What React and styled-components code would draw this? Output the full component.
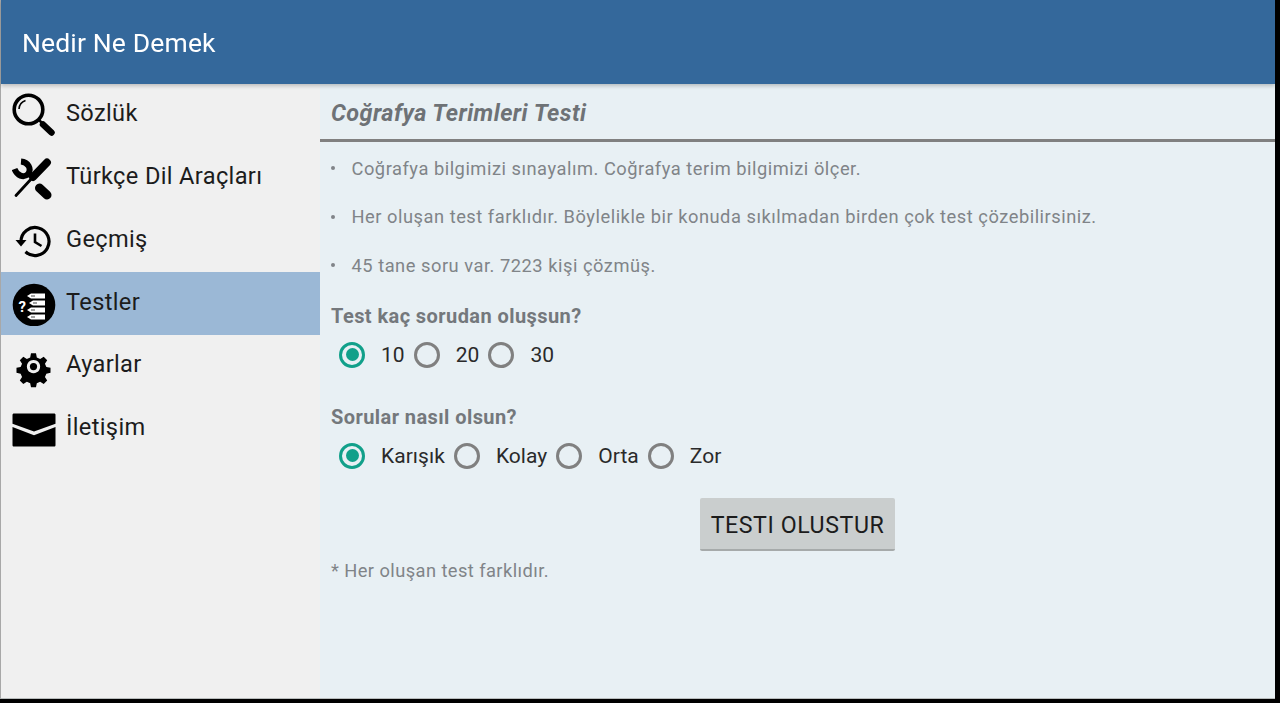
import React from "react";
import styled, { createGlobalStyle } from "styled-components";

const Global = createGlobalStyle`
  html, body { margin: 0; padding: 0; background: #000; height: 100%; overflow: hidden; }
  #root { height: 100%; }
  * { box-sizing: border-box; }
`;
const Screen = styled.div`
  width: 1275px; height: 699px; display: flex; flex-direction: column;
  border-left: 1px solid #a8a8a8; border-bottom: 1px solid #b8bcbc;
  font-family: Roboto, "Noto Sans", sans-serif; background: #e8f0f4;
  filter: blur(0.5px);
`;
const AppBar = styled.header`
  height: 84px; flex: none; background: #34689b; display: flex; align-items: center;
  padding-left: 21px; color: #fff; font-size: 26.5px; letter-spacing: .15px;
  box-shadow: 0 2px 4px rgba(0,0,0,.22); position: relative; z-index: 1;
`;
const Body = styled.div`flex: 1; display: flex; min-height: 0;`;
const Side = styled.nav`width: 319px; flex: none; background: #f0f0f0; display: flex; flex-direction: column;`;
const NavRow = styled.div`
  height: 62.75px; flex: none; display: flex; align-items: center; gap: 10px; padding: 0 0 4px 11px;
  font-size: 23.6px; letter-spacing: .35px; color: #1c1c1c; background: ${p => p.$active ? "#9bb8d6" : "transparent"};
  svg { width: 44px; height: 44px; flex: none; margin-top: 4px; }
`;
const Main = styled.main`flex: 1; padding: 0 0 0 11px; color: #808488;`;
const Title = styled.h1`
  margin: 0 0 0 -11px; padding: 3px 0 0 11px; height: 58px; display: flex; align-items: center;
  border-bottom: 3px solid #808080; font-size: 23.4px; letter-spacing: .44px; font-style: italic; font-weight: 700; color: #6e7276;
`;
const Notes = styled.ul`
  list-style: none; margin: 2px 0 0; padding: 0;
`;
const Note = styled.li`
  height: 48.5px; display: flex; align-items: center; font-size: 18.3px; letter-spacing: .52px; gap: 16.500px;
  &::before { content: ""; width: 4px; height: 4px; border-radius: 50%; background: #808488; }
`;
const Heading = styled.h2`
  margin: ${p => p.$top}px 0 0; font-size: 20px; letter-spacing: .42px; font-weight: 700; color: #74787c; height: 33px; display: flex; align-items: center;
`;
const Radios = styled.div`display: flex; align-items: center; gap: 9px; padding-left: 8px; height: 44px;`;
const Item = styled.label`display: flex; align-items: center; gap: 16px; font-size: 21px; letter-spacing: .04px; color: #2a2a2a;`;
const Radio = styled.span`
  width: 26px; height: 26px; border-radius: 50%; display: flex; align-items: center; justify-content: center; flex: none;
  border: 3px solid ${p => p.$on ? "#11a08a" : "#808080"};
  &::after { content: ""; width: 13px; height: 13px; border-radius: 50%; background: ${p => p.$on ? "#11a08a" : "transparent"}; }
`;
const ButtonRow = styled.div`display: flex; margin: 20px 0 0 369px;`;
const Button = styled.button`
  width: 195px; height: 53px; border: 0; border-bottom: 2px solid #a6aaaa; border-radius: 2px; background: #cacece;
  font: 400 23.2px Roboto, sans-serif; letter-spacing: .55px; color: #1c1c1c; padding: 3px 0 0;
`;
const Foot = styled.p`margin: 9px 0 0; font-size: 18.3px; letter-spacing: .43px; color: #808488; line-height: 22px;`;

const Search = () => (
  <svg viewBox="0 0 44 44">
    <circle cx="16.500" cy="16.500" r="14.300" fill="none" stroke="#000" strokeWidth="3.600" />
    <path d="M7 16a9.500 9.500 0 0 1 6.500-8.500" fill="none" stroke="#000" strokeWidth="1.600" />
    <path d="M27 27l3 3" stroke="#000" strokeWidth="2.500" />
    <path d="M31 31.500l8.500 8" stroke="#000" strokeWidth="6.500" strokeLinecap="round" />
  </svg>
);
const Tools = () => (
  <svg viewBox="0 0 44 44">
    <path d="M27.500 32l7.500 7" stroke="#000" strokeWidth="9" strokeLinecap="round" />
    <path d="M9 5.500C16 6 20 13 16 18 11.500 22.500 5 19.500 2.500 13" fill="none" stroke="#000" strokeWidth="6" />
    <path d="M15 17l3 3" stroke="#000" strokeWidth="5" />
    <path d="M35 6.500L21 21" stroke="#000" strokeWidth="7.800" strokeLinecap="round" />
    <path d="M21 21L4 39.500" stroke="#000" strokeWidth="2.800" strokeLinecap="round" />
  </svg>
);
const History = () => (
  <svg viewBox="0 0 44 44">
    <path d="M9 22.500a14 14 0 1 1 4.500 10.300" fill="none" stroke="#000" strokeWidth="3.200" />
    <path d="M3.500 21h11L9 27.500z" fill="#000" />
    <path d="M23 14.500v8.500l6.500 4" fill="none" stroke="#000" strokeWidth="2.600" />
  </svg>
);
const TestIcon = () => (
  <svg viewBox="0 0 44 44">
    <circle cx="22" cy="23" r="21.300" fill="#000" />
    <text x="6.500" y="30" fontFamily="Roboto, sans-serif" fontWeight="700" fontSize="15" fill="#fff">?</text>
    <g fill="#fff">
      <path d="M15 14l4-2.500h14v5H19z" />
      <path d="M17 21l4-2.500h12v5H21z" />
      <path d="M15 28l4-2.500h14v5H19z" />
      <path d="M15 35l4-2.500h14v5H19z" />
    </g>
    <g fill="#666">
      <rect x="19" y="13.400" width="4" height="1.200" />
      <rect x="21" y="20.400" width="4" height="1.200" />
      <rect x="19" y="27.400" width="4" height="1.200" />
      <rect x="19" y="34.400" width="4" height="1.200" />
    </g>
  </svg>
);
const Gear = () => (
  <svg viewBox="0 0 44 44">
    <path fillRule="evenodd" fill="#000" d="M19 6h6l1 5 4 1.700 4.300-2.700 4.200 4.200-2.700 4.300 1.700 4 5 1v6l-5 1-1.700 4 2.700 4.300-4.200 4.200-4.300-2.700-4 1.700-1 5h-6l-1-5-4-1.700-4.300 2.700-4.200-4.200 2.700-4.300-1.700-4-5-1v-6l5-1 1.700-4-2.700-4.300 4.200-4.200 4.300 2.700 4-1.700zM22 14a8 8 0 1 0 .01 0z" transform="translate(3.240 4.340) scale(.83)" />
    <circle cx="21.500" cy="22.600" r="3.600" fill="#000" />
  </svg>
);
const Mail = () => (
  <svg viewBox="0 0 44 44">
    <path d="M2 6.400h40c1 0 1.500.5 1.500 1.500v8.800L22 24.400.5 16.700V7.900c0-1 .5-1.500 1.500-1.500z" fill="#000" />
    <path d="M.5 19.900L22 28.200l21.500-8.300v18c0 1-.5 1.500-1.500 1.500H2c-1 0-1.500-.5-1.500-1.500z" fill="#000" />
  </svg>
);

const nav = [
  ["Sözlük", Search], ["Türkçe Dil Araçları", Tools], ["Geçmiş", History],
  ["Testler", TestIcon], ["Ayarlar", Gear], ["İletişim", Mail],
];
const RadioGroup = ({ items }) => (
  <Radios>
    {items.map((t, i) => <Item key={t}><Radio $on={i === 0} />{t}</Item>)}
  </Radios>
);

export default function App() {
  return (
    <Screen>
      <Global />
      <AppBar>Nedir Ne Demek</AppBar>
      <Body>
        <Side>
          {nav.map(([t, I]) => <NavRow key={t} $active={t === "Testler"}><I />{t}</NavRow>)}
        </Side>
        <Main>
          <Title>Coğrafya Terimleri Testi</Title>
          <Notes>
            <Note>Coğrafya bilgimizi sınayalım. Coğrafya terim bilgimizi ölçer.</Note>
            <Note>Her oluşan test farklıdır. Böylelikle bir konuda sıkılmadan birden çok test çözebilirsiniz.</Note>
            <Note>45 tane soru var. 7223 kişi çözmüş.</Note>
          </Notes>
          <Heading $top={10}>Test kaç sorudan oluşsun?</Heading>
          <RadioGroup items={["10", "20", "30"]} />
          <Heading $top={24}>Sorular nasıl olsun?</Heading>
          <RadioGroup items={["Karışık", "Kolay", "Orta", "Zor"]} />
          <ButtonRow><Button>TESTI OLUSTUR</Button></ButtonRow>
          <Foot>* Her oluşan test farklıdır.</Foot>
        </Main>
      </Body>
    </Screen>
  );
}
